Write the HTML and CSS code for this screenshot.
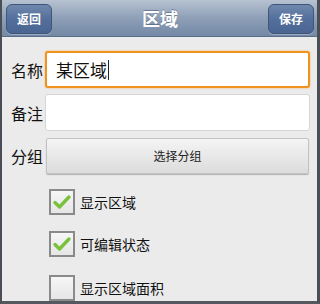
FILE: index.html
```html
<!DOCTYPE html>
<html>
<head>
<meta charset="utf-8">
<link rel="stylesheet" href="styles.css">
</head>
<body>
<div class="screen">
  <header class="bar">
    <button class="nav-btn">返回</button>
    <div class="title">区域</div>
    <button class="nav-btn">保存</button>
  </header>
  <main class="form">
    <div class="row">
      <label class="lbl">名称</label>
      <div class="field focus">某区域<span class="caret"></span></div>
    </div>
    <div class="row">
      <label class="lbl">备注</label>
      <div class="field"></div>
    </div>
    <div class="row">
      <label class="lbl">分组</label>
      <button class="pick">选择分组</button>
    </div>
    <div class="checks">
      <div class="check">
        <span class="box"><svg viewBox="0 0 20 20" width="20" height="20"><path d="M3 10.5 L7.5 15 L17 5" fill="none" stroke="#7ac23c" stroke-width="3.4" stroke-linecap="round" stroke-linejoin="round"/></svg></span>
        <span class="ctext">显示区域</span>
      </div>
      <div class="check">
        <span class="box"><svg viewBox="0 0 20 20" width="20" height="20"><path d="M3 10.5 L7.5 15 L17 5" fill="none" stroke="#7ac23c" stroke-width="3.4" stroke-linecap="round" stroke-linejoin="round"/></svg></span>
        <span class="ctext">可编辑状态</span>
      </div>
      <div class="check">
        <span class="box"></span>
        <span class="ctext">显示区域面积</span>
      </div>
    </div>
  </main>
</div>
</body>
</html>
```
FILE: styles.css
```css
* { box-sizing: border-box; }
html, body { margin: 0; padding: 0; }
body {
  width: 320px; height: 304px; overflow: hidden;
  font-family: "Noto Sans CJK SC", "Noto Sans", sans-serif;
  background: #3a3d42;
}
.screen {
  width: 320px; height: 304px;
  border-left: 2px solid #4a4e55;
  border-right: 3px solid #4a4e55;
  border-bottom: 3px solid #55585e;
  background: #ebebeb;
  display: flex; flex-direction: column;
}
.bar {
  height: 37px;
  background: linear-gradient(#b7c2d1, #8e9fb7 50%, #7489a6);
  border-bottom: 1px solid #5a6d89;
  display: flex; align-items: center; justify-content: space-between;
  padding: 0 3px 0 4px;
}
.nav-btn {
  width: 46px; height: 30px;
  border-radius: 6px;
  border: 1px solid #3f5678;
  background: linear-gradient(#7088ad, #536f9b 50%, #4a6592);
  color: #fff;
  font-family: inherit; font-size: 12px; font-weight: bold;
  padding: 0; margin-top: 1px;
  box-shadow: 0 1px 0 rgba(255,255,255,0.25);
}
.title {
  color: #fff; font-size: 18px; font-weight: bold;
  text-shadow: 0 -1px 0 rgba(60,75,100,0.5);
}
.form {
  flex: 1;
  padding: 14px 7px 0 9px;
  display: flex; flex-direction: column; gap: 6px;
}
.row { display: flex; align-items: center; height: 37px; }
.lbl { width: 34px; font-size: 16px; color: #111; flex: none; }
.field {
  flex: 1; height: 37px;
  background: #fff;
  border: 1px solid #d6d6d6;
  border-radius: 3px;
  font-size: 17px; color: #111;
  padding: 0 0 0 9px;
  display: flex; align-items: center;
}
.field.focus { border: 2px solid #f0921e; box-shadow: 0 0 2px #f5b060; }
.caret { width: 1px; height: 20px; background: #222; margin-left: 1px; }
.pick {
  flex: none; width: 263px; height: 36px; margin-left: 1px;
  border: 1px solid #c2c2c2; border-radius: 2px;
  background: linear-gradient(#f4f4f4, #dcdcdc);
  box-shadow: 0 1px 1px rgba(0,0,0,0.25);
  font-family: inherit; font-size: 12px; color: #222;
  padding: 0;
}
.checks {
  padding: 9px 0 0 38px;
  display: flex; flex-direction: column; gap: 16px;
}
.check { display: flex; align-items: center; gap: 5px; height: 26px; }
.check:last-child { margin-top: 2px; }
.box {
  width: 26px; height: 26px;
  border: 2px solid #8a8a8a;
  background: linear-gradient(#f6f6f6, #e6e6e6);
  display: flex; align-items: center; justify-content: center;
}
.ctext { font-size: 14px; color: #111; }
```
